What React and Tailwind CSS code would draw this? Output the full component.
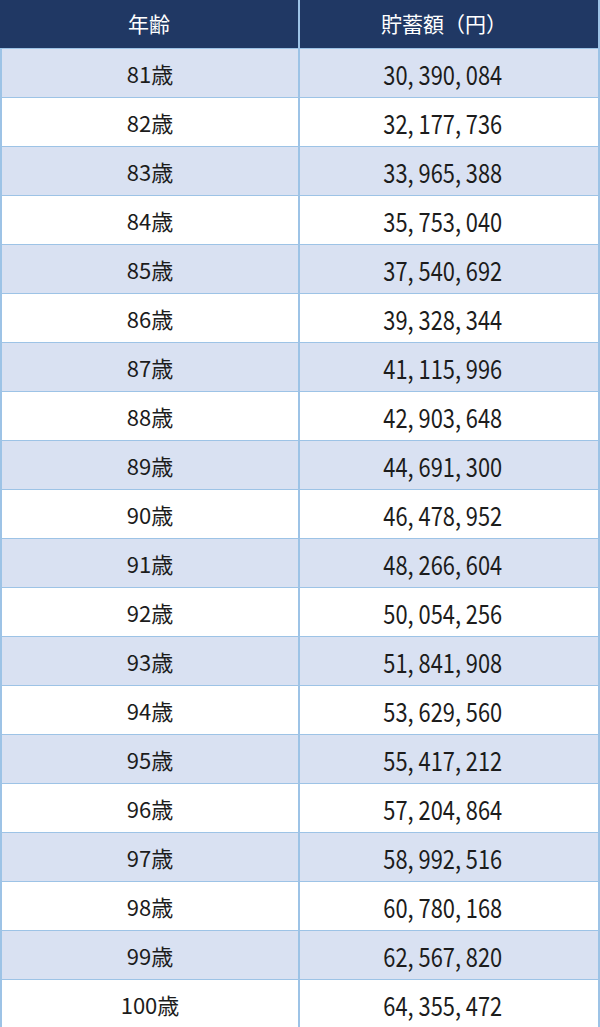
const rows = [
  ["81歳", "30,390,084"],
  ["82歳", "32,177,736"],
  ["83歳", "33,965,388"],
  ["84歳", "35,753,040"],
  ["85歳", "37,540,692"],
  ["86歳", "39,328,344"],
  ["87歳", "41,115,996"],
  ["88歳", "42,903,648"],
  ["89歳", "44,691,300"],
  ["90歳", "46,478,952"],
  ["91歳", "48,266,604"],
  ["92歳", "50,054,256"],
  ["93歳", "51,841,908"],
  ["94歳", "53,629,560"],
  ["95歳", "55,417,212"],
  ["96歳", "57,204,864"],
  ["97歳", "58,992,516"],
  ["98歳", "60,780,168"],
  ["99歳", "62,567,820"],
  ["100歳", "64,355,472"],
];

export default function App() {
  return (
    <div className="w-[600px] bg-white font-['Noto_Sans_CJK_JP',sans-serif] text-[#1c1c1c]">
      <div className="flex h-[49px] border-b border-[#9dc3e6] bg-[#203864] text-[21px] text-white">
        <div className="flex w-[300px] items-center justify-center border-r-2 border-[#9dc3e6]">年齢</div>
        <div className="flex flex-1 items-center justify-center border-r-2 border-[#9dc3e6] pr-[10px]">貯蓄額（円）</div>
      </div>
      {rows.map(([age, amount], i) => (
        <div
          key={age}
          className={`flex h-[49px] border-x-2 border-b border-[#9dc3e6] ${i % 2 === 0 ? "bg-[#d9e1f2]" : "bg-white"}`}
        >
          <div className="flex w-[298px] items-center justify-center border-r-2 border-[#9dc3e6] text-[22px]">{age}</div>
          <div className="flex flex-1 items-center justify-center pr-[13px] pt-[1px] text-[26px]">
            <span className="inline-block scale-x-[0.84]">{amount.replace(/,/g, ", ")}</span>
          </div>
        </div>
      ))}
    </div>
  );
}
